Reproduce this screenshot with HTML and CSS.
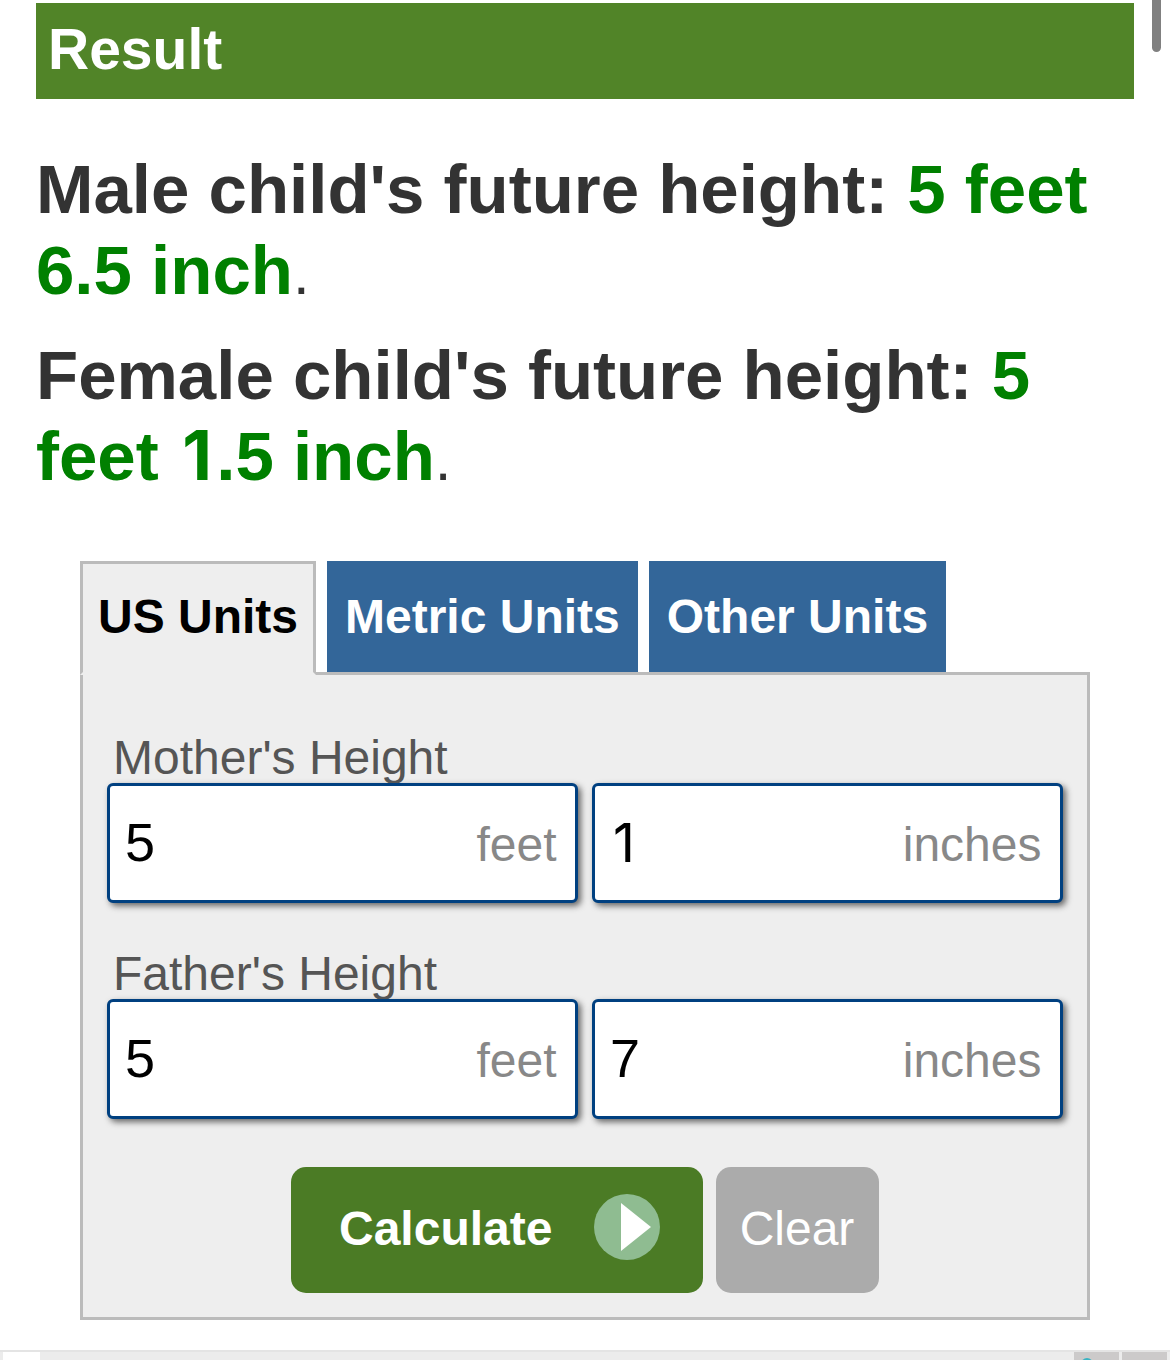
FILE: index.html
```html
<!DOCTYPE html>
<html lang="en">
<head>
<meta charset="utf-8">
<title>Height Calculator</title>
<link rel="stylesheet" href="styles.css">
</head>
<body>
<div class="scroll-thumb"></div>
<main class="content">
  <h2 class="result-title">Result</h2>
  <div class="results">
    <p><b>Male child's future height: <span class="value">5 feet 6.5 inch</span></b><span class="stop">.</span></p>
    <p><b>Female child's future height: <span class="value">5 feet <span class="digit-one">1</span>.5 inch</span></b><span class="stop">.</span></p>
  </div>
  <section class="calculator">
    <nav class="tabs">
      <a class="tab tab-active">US Units</a>
      <a class="tab">Metric Units</a>
      <a class="tab">Other Units</a>
    </nav>
    <form class="panel">
      <div class="field">
        <label class="field-label">Mother's Height</label>
        <div class="inputs">
          <div class="input-box"><input class="number" type="text" value="5"><span class="unit">feet</span></div>
          <div class="input-box"><input class="number number-one" type="text" value="1"><span class="unit">inches</span></div>
        </div>
      </div>
      <div class="field">
        <label class="field-label">Father's Height</label>
        <div class="inputs">
          <div class="input-box"><input class="number" type="text" value="5"><span class="unit">feet</span></div>
          <div class="input-box"><input class="number" type="text" value="7"><span class="unit">inches</span></div>
        </div>
      </div>
      <div class="actions">
        <button class="button calculate" type="button">Calculate
          <svg class="play" viewBox="0 0 66 66"><circle cx="33" cy="33" r="33" fill="#8fbc91"/><path d="M27 9v48l30-24z" fill="#fff"/></svg>
        </button>
        <button class="button clear" type="button">Clear</button>
      </div>
    </form>
  </section>
</main>
<footer class="ad">
  <div class="ad-tile"></div>
  <div class="ad-controls">
    <div class="ad-button"><svg class="ad-icon" viewBox="0 0 16 16"><circle cx="8" cy="8" r="6" fill="#39b3c2"/></svg></div>
    <div class="ad-button"></div>
  </div>
</footer>
</body>
</html>
```
FILE: styles.css
```css
* { box-sizing: border-box; }

body {
  margin: 0;
  height: 1360px;
  overflow: hidden;
  display: flex;
  flex-direction: column;
  background: #fff;
  color: #333;
  font-family: "Liberation Sans", Arial, sans-serif;
}

.scroll-thumb {
  position: absolute;
  top: -40px;
  right: 9px;
  width: 9px;
  height: 92px;
  border-radius: 5px;
  background: #808080;
}

.content { padding: 3px 36px 0; height: 1350px; flex: none; }

.result-title {
  margin: 0;
  height: 96px;
  padding: 13px 12px;
  background: #518428;
  color: #fff;
  font-size: 57px;
  line-height: 66px;
}

.results { padding-top: 50px; font-size: 69px; line-height: 81px; }
.results p { margin: 0 0 24px; }
.results p:last-child { margin-bottom: 0; }
.value { color: #008000; }
.stop { font-size: 60px; line-height: 1; }

/* Plain numeral one, without a foot serif */
.digit-one {
  display: inline-block;
  width: 0.556em;
  line-height: 1;
  text-align: center;
  font-family: Inter, sans-serif;
}

.calculator { margin: 64px 44px 0; }

.tabs { display: flex; gap: 11px; }
.tab {
  height: 111px;
  padding: 0 18px;
  background: #336699;
  color: #fff;
  font-size: 48px;
  font-weight: bold;
  line-height: 111px;
  white-space: nowrap;
}
.tab-active {
  position: relative;
  height: 114px;
  margin-bottom: -3px;
  padding: 0 15px;
  border: 3px solid #bbb;
  border-bottom-color: #eee;
  background: #eee;
  color: #000;
  line-height: 105px;
}

.panel {
  height: 648px;
  padding: 56px 24px 0;
  border: 3px solid #bbb;
  background: #eee;
}

.field { margin-bottom: 44px; }
.field-label {
  display: block;
  height: 52px;
  padding-left: 6px;
  color: #555;
  font-size: 48px;
  line-height: 53px;
}
.inputs { display: flex; gap: 14px; }
.input-box {
  display: flex;
  align-items: center;
  width: 471px;
  height: 120px;
  padding: 0 18.5px 0 15px;
  border: 3px solid #004080;
  border-radius: 6px;
  background: #fff;
  box-shadow: 3px 3px 6px #666;
}
.number {
  flex: 1;
  min-width: 0;
  height: 80px;
  padding: 0 0 2px;
  border: 0;
  background: none;
  color: #000;
  font: 54px "Liberation Sans", Arial, sans-serif;
}
.number-one { padding-left: 3px; font-family: Inter, sans-serif; }
.unit { padding-top: 3px; color: #888; font-size: 48px; }

.actions { display: flex; justify-content: center; gap: 13px; margin-top: 48px; }
.button {
  height: 126px;
  border: 0;
  border-radius: 15px;
  color: #fff;
  font: 48px "Liberation Sans", Arial, sans-serif;
}
.calculate {
  display: flex;
  align-items: center;
  justify-content: space-between;
  width: 412px;
  padding: 0 43px 3px 48px;
  background: #4b7b25;
  font-weight: bold;
}
.play { width: 66px; height: 66px; margin-top: -3px; }
.clear { width: 163px; padding: 0 1px 3px 0; background: #ababab; }

.ad {
  display: flex;
  justify-content: space-between;
  flex: none;
  height: 10px;
  padding: 0 3px;
  overflow: hidden;
  border-top: 2px solid #e4e4e4;
  background: #ececec;
}
.ad-tile { width: 37px; background: #fff; }
.ad-controls { display: flex; gap: 3px; }
.ad-button { width: 45px; background: #cccaca; }
.ad-icon { display: block; width: 16px; height: 16px; margin: 4px 0 0 5px; }
```
